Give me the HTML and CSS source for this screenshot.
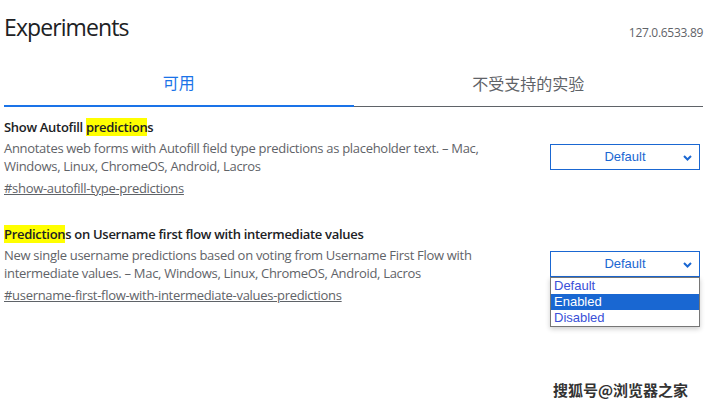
FILE: index.html
```html
<!DOCTYPE html>
<html lang="zh-CN">
<head>
<meta charset="utf-8">
<title>Experiments</title>
<link rel="stylesheet" href="styles.css">
</head>
<body>
<div class="page">
  <header class="header">
    <h1 class="title">Experiments</h1>
    <span class="version">127.0.6533.89</span>
  </header>
  <nav class="tabs">
    <div class="tab tab-active">可用</div>
    <div class="tab">不受支持的实验</div>
  </nav>
  <section class="experiment">
    <div class="exp-text">
      <h3 class="exp-name">Show Autofill <mark class="hl">prediction</mark>s</h3>
      <p class="exp-desc">Annotates web forms with Autofill field type predictions as placeholder text. – Mac, Windows, Linux, ChromeOS, Android, Lacros</p>
      <a class="exp-link" href="#show-autofill-type-predictions">#show-autofill-type-predictions</a>
    </div>
    <div class="select-wrap">
      <div class="select"><span class="select-value">Default</span>
        <svg class="chev" width="9" height="6" viewBox="0 0 9 6"><polyline points="1,1 4.5,4.5 8,1" fill="none" stroke="#1a67d2" stroke-width="2"/></svg>
      </div>
    </div>
  </section>
  <section class="experiment">
    <div class="exp-text">
      <h3 class="exp-name"><mark class="hl">Prediction</mark>s on Username first flow with intermediate values</h3>
      <p class="exp-desc">New single username predictions based on voting from Username First Flow with intermediate values. – Mac, Windows, Linux, ChromeOS, Android, Lacros</p>
      <a class="exp-link" href="#username-first-flow-with-intermediate-values-predictions">#username-first-flow-with-intermediate-values-predictions</a>
    </div>
    <div class="select-wrap">
      <div class="select"><span class="select-value">Default</span>
        <svg class="chev" width="9" height="6" viewBox="0 0 9 6"><polyline points="1,1 4.5,4.5 8,1" fill="none" stroke="#1a67d2" stroke-width="2"/></svg>
      </div>
      <ul class="dropdown">
        <li class="opt">Default</li>
        <li class="opt opt-sel">Enabled</li>
        <li class="opt">Disabled</li>
      </ul>
    </div>
  </section>
  <div class="watermark">搜狐号@浏览器之家</div>
</div>
</body>
</html>
```
FILE: styles.css
```css
html, body {
  margin: 0;
  padding: 0;
  background: #fff;
}
.page {
  position: relative;
  width: 699px;
  min-height: 407px;
  padding: 0 3px 0 4px;
  font-family: "Open Sans", "Noto Sans CJK SC", sans-serif;
  color: #202124;
}
.header {
  display: flex;
  justify-content: space-between;
  align-items: flex-end;
  padding-top: 11px;
}
.title {
  margin: 0;
  font-size: 23px;
  font-weight: 400;
  line-height: 32px;
  letter-spacing: -0.9px;
}
.version {
  font-size: 12px;
  line-height: 14px;
  padding-bottom: 3px;
  color: #5f6368;
  letter-spacing: -0.3px;
}
.tabs {
  display: flex;
  align-items: flex-end;
  margin-top: 28px;
}
.tab {
  flex: 1;
  text-align: center;
  font-family: "Noto Sans CJK SC", sans-serif;
  font-size: 16px;
  line-height: 22px;
  padding-bottom: 12px;
  color: #5f6368;
  border-bottom: 1px solid #5f6368;
}
.tab-active {
  color: #1a73e8;
  border-bottom: 2px solid #1a73e8;
}
.experiment {
  display: flex;
  align-items: center;
  justify-content: space-between;
  padding: 12px 0 17px;
}
.exp-text {
  width: 500px;
}
.exp-name {
  margin: 0;
  font-size: 13px;
  font-weight: 600;
  line-height: 17px;
  letter-spacing: -0.3px;
  color: #202124;
}
.hl {
  background: #ffff00;
  color: #202124;
}
.exp-desc {
  margin: 3px 0 4px;
  font-size: 13px;
  line-height: 18px;
  letter-spacing: -0.3px;
  color: #5f6368;
}
.exp-link {
  display: block;
  width: max-content;
  font-size: 13px;
  line-height: 18px;
  letter-spacing: -0.3px;
  color: #5f6368;
}
.select-wrap {
  position: relative;
  width: 150px;
  margin: 0 3px 3px 0;
}
.select {
  display: flex;
  align-items: center;
  justify-content: center;
  position: relative;
  box-sizing: border-box;
  height: 26px;
  border: 1px solid #1a67d2;
  font-family: "Liberation Sans", Arial, sans-serif;
  font-size: 13px;
  color: #1a67d2;
}
.chev {
  position: absolute;
  right: 7px;
  top: 10px;
}
.dropdown {
  position: absolute;
  z-index: 10;
  left: 0;
  top: 26px;
  width: 150px;
  box-sizing: border-box;
  margin: 0;
  padding: 0;
  list-style: none;
  background: #fff;
  border: 1px solid #767676;
  box-shadow: 0 2px 5px rgba(0, 0, 0, 0.2);
  font-family: "Liberation Sans", Arial, sans-serif;
  font-size: 13px;
  color: #3a50d8;
}
.opt {
  height: 16px;
  line-height: 16px;
  padding-left: 3px;
}
.opt-sel {
  background: #1967d2;
  color: #fff;
}
.watermark {
  position: absolute;
  left: 553px;
  top: 379px;
  font-family: "Noto Sans CJK SC", sans-serif;
  font-size: 15px;
  font-weight: 700;
  color: #333;
  text-shadow: 0 0 2px #fff, 0 0 2px #fff;
}
```
